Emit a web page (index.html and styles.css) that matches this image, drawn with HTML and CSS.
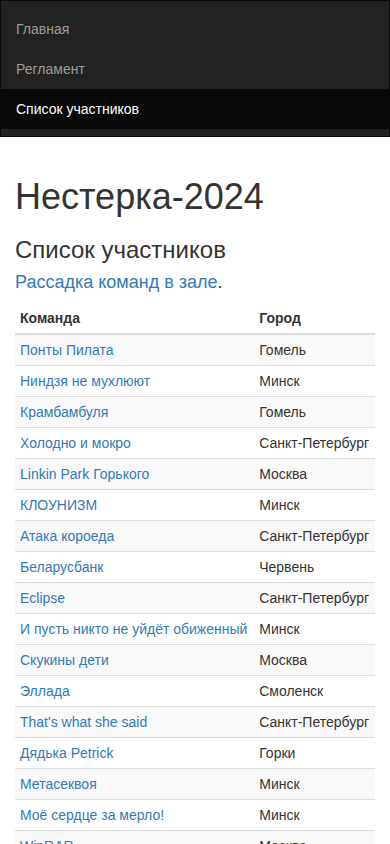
FILE: index.html
```html
<!DOCTYPE html>
<html lang="ru">
<head>
    <meta charset="UTF-8">
    <meta name="viewport" content="width=device-width, initial-scale=1.0">
    <title>Нестерка-2024 — Список участников</title>

    <!-- css file link -->
    <link rel="stylesheet" href="styles.css">
</head>
<body>

    <!-- navigation -->
    <nav class="navbar">
        <ul class="nav">
            <li><a href="#">Главная</a></li>
            <li><a href="#">Регламент</a></li>
            <li class="active"><a href="#">Список участников</a></li>
        </ul>
    </nav>

    <div class="container">
        <h1 class="title">Нестерка-2024</h1>
        <h3 class="subtitle">Список участников</h3>
        <h4 class="seating"><a href="#">Рассадка команд в зале</a>.</h4>

        <!-- teams table -->
        <table class="teams">
            <thead>
                <tr>
                    <th>Команда</th>
                    <th>Город</th>
                </tr>
            </thead>
            <tbody>
                <tr><td><a href="#">Понты Пилата</a></td><td>Гомель</td></tr>
                <tr><td><a href="#">Ниндзя не мухлюют</a></td><td>Минск</td></tr>
                <tr><td><a href="#">Крамбамбуля</a></td><td>Гомель</td></tr>
                <tr><td><a href="#">Холодно и мокро</a></td><td>Санкт-Петербург</td></tr>
                <tr><td><a href="#">Linkin Park Горького</a></td><td>Москва</td></tr>
                <tr><td><a href="#">КЛОУНИЗМ</a></td><td>Минск</td></tr>
                <tr><td><a href="#">Атака короеда</a></td><td>Санкт-Петербург</td></tr>
                <tr><td><a href="#">Беларусбанк</a></td><td>Червень</td></tr>
                <tr><td><a href="#">Eclipse</a></td><td>Санкт-Петербург</td></tr>
                <tr><td><a href="#">И пусть никто не уйдёт обиженный</a></td><td>Минск</td></tr>
                <tr><td><a href="#">Скукины дети</a></td><td>Москва</td></tr>
                <tr><td><a href="#">Эллада</a></td><td>Смоленск</td></tr>
                <tr><td><a href="#">That's what she said</a></td><td>Санкт-Петербург</td></tr>
                <tr><td><a href="#">Дядька Petrick</a></td><td>Горки</td></tr>
                <tr><td><a href="#">Метасеквоя</a></td><td>Минск</td></tr>
                <tr><td><a href="#">Моё сердце за мерло!</a></td><td>Минск</td></tr>
                <tr><td><a href="#">WinRAR</a></td><td>Москва</td></tr>
            </tbody>
        </table>
    </div>

</body>
</html>
```

FILE: styles.css
```css
*{
    box-sizing: border-box;
}
body{
    margin: 0;
    font-family: "Liberation Sans", Arial, Helvetica, sans-serif;
    font-size: 14px;
    line-height: 1.42857;
    color: #333;
    background: #fff;
}
a{
    color: #337ab7;
    text-decoration: none;
}

/* navbar */
.navbar{
    background: #222;
    border: 1px solid #080808;
    margin-bottom: 20px;
}
.nav{
    list-style: none;
    margin: 0;
    padding: 7.5px 0;
}
.nav li a{
    display: block;
    padding: 10px 15px;
    line-height: 20px;
    color: #9d9d9d;
}
.nav li.active a{
    color: #fff;
    background: #080808;
}

/* page */
.container{
    display: flow-root;
    padding: 0 15px;
}
.title,.subtitle,.seating{
    font-weight: 500;
    line-height: 1.1;
    color: #333;
}
.title{
    font-size: 36px;
    margin: 20px 0 10px;
}
.subtitle{
    font-size: 24px;
    margin: 20px 0 10px;
}
.seating{
    font-size: 18px;
    margin: 10px 0 10px;
}

/* table */
.teams{
    width: 100%;
    border-collapse: collapse;
    border-spacing: 0;
    margin-bottom: 20px;
}
.teams th,.teams td{
    padding: 5px;
    line-height: 20px;
    text-align: left;
    vertical-align: top;
    border-top: 1px solid #ddd;
}
.teams th{
    font-weight: bold;
    vertical-align: bottom;
    border-top: 0;
    border-bottom: 2px solid #ddd;
}
.teams tbody tr:nth-of-type(odd){
    background: #f9f9f9;
}
```
